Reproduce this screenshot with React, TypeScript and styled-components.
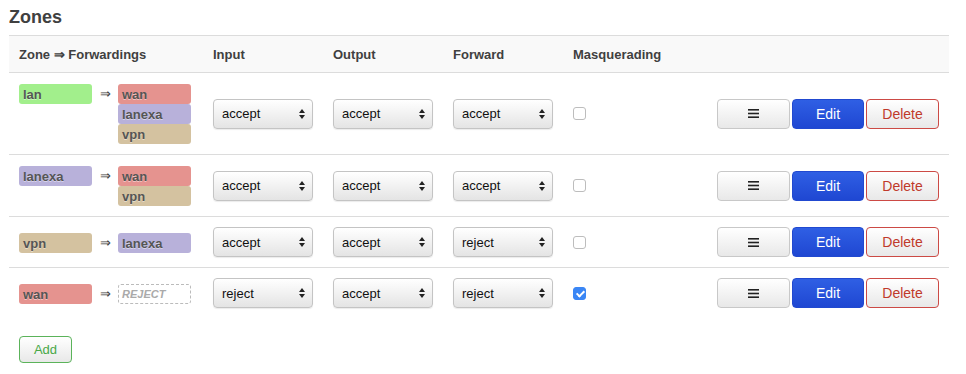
import React from "react";
import styled, { createGlobalStyle } from "styled-components";

const Global = createGlobalStyle`
  html, body { margin: 0; padding: 0; background: #fff; }
  body { font-family: "Liberation Sans", Arial, sans-serif; color: #404040; }
`;

const Page = styled.div`
  width: 940px;
  padding: 0 0 0 9px;
`;

const Title = styled.h2`
  margin: 0;
  padding-top: 6px;
  height: 29px;
  font-size: 18px;
  line-height: 22px;
  font-weight: bold;
  color: #404040;
`;

const cols = "194px 120px 120px 120px 1fr auto";

const HeaderRow = styled.div`
  display: grid;
  grid-template-columns: ${cols};
  align-items: center;
  height: 36px;
  border-top: 1px solid #dcdcdc;
  background: #f9f9f9;
`;

const HeadCell = styled.div`
  padding: 0 10px;
  font-size: 13px;
  font-weight: bold;
  color: #404040;
  white-space: nowrap;
`;

const Row = styled.div`
  display: grid;
  grid-template-columns: ${cols};
  align-items: center;
  border-top: 1px solid #dcdcdc;
`;

const Cell = styled.div<{ $right?: boolean }>`
  padding: 10px;
  display: flex;
  justify-content: ${(p) => (p.$right ? "flex-end" : "flex-start")};
  align-items: center;
`;

const ZoneCell = styled.div`
  padding: 11px 10px 10px;
  display: flex;
  align-items: flex-start;
  align-self: stretch;
`;

const ZoneWrap = styled.div`
  display: flex;
  align-items: flex-start;
  margin: auto 0;
`;

const Badge = styled.div<{ $bg: string }>`
  box-sizing: border-box;
  width: 73px;
  height: 20px;
  padding: 0 4px;
  background: ${(p) => p.$bg};
  border-radius: 3px;
  font-size: 13px;
  font-weight: bold;
  line-height: 21px;
  color: #555;
  text-shadow: 0 1px 0 rgba(255, 255, 255, 0.45);
`;

const Stack = styled.div`
  display: flex;
  flex-direction: column;
`;

const Arrow = styled.span`
  width: 26px;
  text-align: center;
  font-size: 13px;
  line-height: 20px;
  color: #404040;
`;

const Reject = styled.div`
  box-sizing: border-box;
  width: 73px;
  height: 20px;
  padding: 0 3px;
  border: 1px dashed #bbb;
  border-radius: 3px;
  font-size: 11px;
  font-style: italic;
  font-weight: bold;
  line-height: 18px;
  color: #aaa;
`;

const SelectWrap = styled.div`
  position: relative;
  width: 100px;
  height: 30px;
`;

const Select = styled.select`
  appearance: none;
  -webkit-appearance: none;
  box-sizing: border-box;
  width: 100px;
  height: 30px;
  padding: 0 18px 0 8px;
  border: 1px solid #c4c4c4;
  border-radius: 4px;
  background: linear-gradient(#ffffff, #e4e4e4);
  box-shadow: 0 1px 1px rgba(0, 0, 0, 0.08);
  font-family: "Liberation Sans", Arial, sans-serif;
  font-size: 13px;
  color: #111;
  outline: none;
`;

const SelectArrow = styled.svg`
  position: absolute;
  right: 8px;
  top: 10px;
  pointer-events: none;
`;

const Check = styled.input`
  appearance: none;
  -webkit-appearance: none;
  box-sizing: border-box;
  width: 13px;
  height: 13px;
  margin: 0;
  border: 1px solid #bdbdbd;
  border-radius: 3px;
  background: #fff;
  position: relative;
  &:checked {
    background: #3a86f5;
    border-color: #3a86f5;
  }
  &:checked::after {
    content: "";
    position: absolute;
    left: 3.5px;
    top: 1px;
    width: 3px;
    height: 6px;
    border: solid #fff;
    border-width: 0 2px 2px 0;
    transform: rotate(45deg);
  }
`;

const Actions = styled.div`
  display: flex;
  gap: 2px;
`;

const Btn = styled.button<{ $kind: "menu" | "edit" | "delete" | "add" }>`
  box-sizing: border-box;
  height: 30px;
  width: ${(p) => (p.$kind === "edit" ? "72px" : "73px")};
  display: flex;
  align-items: center;
  justify-content: center;
  border-radius: 4px;
  font-family: "Liberation Sans", Arial, sans-serif;
  font-size: 14px;
  padding: 0;
  cursor: pointer;
  border: 1px solid
    ${(p) =>
      p.$kind === "edit"
        ? "#2149d0"
        : p.$kind === "delete"
        ? "#cc4a45"
        : p.$kind === "add"
        ? "#5bb35a"
        : "#c8c8c8"};
  background: ${(p) =>
    p.$kind === "edit"
      ? "linear-gradient(#2f5fe4, #1f47d2)"
      : "linear-gradient(#ffffff, #e8e8e8)"};
  color: ${(p) =>
    p.$kind === "edit"
      ? "#fff"
      : p.$kind === "delete"
      ? "#c0392b"
      : p.$kind === "add"
      ? "#48a847"
      : "#222"};
`;

const AddBtn = styled(Btn)`
  width: 53px;
  height: 27px;
  font-size: 13px;
  margin: 18px 0 0 10px;
`;

const COLORS: Record<string, string> = {
  lan: "#a2ef8c",
  wan: "#e5938f",
  lanexa: "#b8b1da",
  vpn: "#d4c2a0",
};

type Zone = {
  name: string;
  fwd: string[];
  input: string;
  output: string;
  forward: string;
  masq: boolean;
};

const zones: Zone[] = [
  { name: "lan", fwd: ["wan", "lanexa", "vpn"], input: "accept", output: "accept", forward: "accept", masq: false },
  { name: "lanexa", fwd: ["wan", "vpn"], input: "accept", output: "accept", forward: "accept", masq: false },
  { name: "vpn", fwd: ["lanexa"], input: "accept", output: "accept", forward: "reject", masq: false },
  { name: "wan", fwd: [], input: "reject", output: "accept", forward: "reject", masq: true },
];

const PolicySelect = ({ value }: { value: string }) => (
  <SelectWrap>
    <Select defaultValue={value}>
      <option value="reject">reject</option>
      <option value="drop">drop</option>
      <option value="accept">accept</option>
    </Select>
    <SelectArrow width="6" height="10" viewBox="0 0 6 10">
      <polygon points="0,4 3,0 6,4" fill="#222" />
      <polygon points="0,6 3,10 6,6" fill="#222" />
    </SelectArrow>
  </SelectWrap>
);

const MenuIcon = () => (
  <svg width="11" height="9" viewBox="0 0 11 9">
    <rect x="0" y="0" width="11" height="1.6" fill="#222" />
    <rect x="0" y="3.7" width="11" height="1.6" fill="#222" />
    <rect x="0" y="7.4" width="11" height="1.6" fill="#222" />
  </svg>
);

export default function App() {
  return (
    <Page>
      <Global />
      <Title>Zones</Title>
      <HeaderRow>
        <HeadCell>Zone ⇒ Forwardings</HeadCell>
        <HeadCell>Input</HeadCell>
        <HeadCell>Output</HeadCell>
        <HeadCell>Forward</HeadCell>
        <HeadCell>Masquerading</HeadCell>
        <HeadCell />
      </HeaderRow>
      {zones.map((z) => (
        <Row key={z.name}>
          <ZoneCell>
            <ZoneWrap>
              <Badge $bg={COLORS[z.name]}>{z.name}</Badge>
              <Arrow>⇒</Arrow>
              <Stack>
                {z.fwd.length ? (
                  z.fwd.map((f) => (
                    <Badge key={f} $bg={COLORS[f]}>
                      {f}
                    </Badge>
                  ))
                ) : (
                  <Reject>REJECT</Reject>
                )}
              </Stack>
            </ZoneWrap>
          </ZoneCell>
          <Cell>
            <PolicySelect value={z.input} />
          </Cell>
          <Cell>
            <PolicySelect value={z.output} />
          </Cell>
          <Cell>
            <PolicySelect value={z.forward} />
          </Cell>
          <Cell>
            <Check type="checkbox" defaultChecked={z.masq} />
          </Cell>
          <Cell $right>
            <Actions>
              <Btn $kind="menu">
                <MenuIcon />
              </Btn>
              <Btn $kind="edit">Edit</Btn>
              <Btn $kind="delete">Delete</Btn>
            </Actions>
          </Cell>
        </Row>
      ))}
      <AddBtn $kind="add">Add</AddBtn>
    </Page>
  );
}
